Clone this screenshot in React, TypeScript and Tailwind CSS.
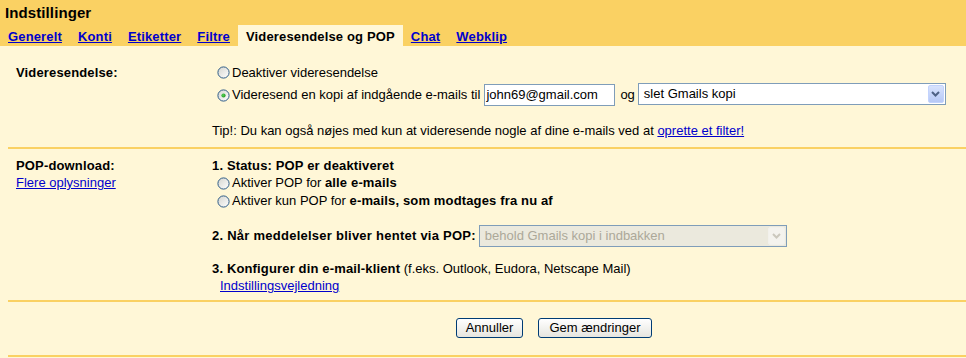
import React from "react";

function Radio({ checked }: { checked?: boolean }) {
  return (
    <svg width="13" height="13" viewBox="0 0 13 13" className="shrink-0">
      <defs>
        <linearGradient id="rg" x1="0" y1="0" x2="1" y2="1">
          <stop offset="0" stopColor="#D4D4CE" />
          <stop offset="1" stopColor="#FFFFFF" />
        </linearGradient>
        <radialGradient id="dot" cx="0.4" cy="0.4" r="0.7">
          <stop offset="0" stopColor="#55D455" />
          <stop offset="1" stopColor="#1E8F1E" />
        </radialGradient>
      </defs>
      <circle cx="6.5" cy="6.5" r="5.6" fill="url(#rg)" stroke="#2E5C87" strokeWidth="1" />
      {checked && <circle cx="6.5" cy="6.5" r="2.1" fill="url(#dot)" />}
    </svg>
  );
}

function Chevron({ color }: { color: string }) {
  return (
    <svg width="9" height="6" viewBox="0 0 9 6">
      <path d="M1 1 L4.5 4.5 L8 1" stroke={color} strokeWidth="2" fill="none" />
    </svg>
  );
}

const tabs = ["Generelt", "Konti", "Etiketter", "Filtre", "Videresendelse og POP", "Chat", "Webklip"];

export default function App() {
  return (
    <div className="w-[966px] h-[358px] overflow-hidden bg-[#FFF7D7] text-black text-[13px] font-['Liberation_Sans',Arial,sans-serif]">
      <div className="bg-[#FAD163]">
        <div className="h-[25px] pl-[5px] pt-[3px] text-[15px] leading-[20px] font-bold tracking-[0.1px]">Indstillinger</div>
        <div className="flex h-[21px]">
          {tabs.map((t) =>
            t === "Videresendelse og POP" ? (
              <div key={t} className="px-2 pt-[1px] leading-[21px] font-bold tracking-[0.15px] bg-[#FFF7D7] text-black">
                {t}
              </div>
            ) : (
              <div key={t} className="px-2 pt-[1px] leading-[21px] font-bold tracking-[0.15px]">
                <a className="text-[#0000CC] underline">{t}</a>
              </div>
            )
          )}
        </div>
      </div>

      <div className="ml-2">
        {/* Section 1 */}
        <div className="flex h-[103px] border-b-2 border-[#FAD163]">
          <div className="w-[204px] pl-2 pt-[18px] leading-[17px] font-bold tracking-[0.15px]">Videresendelse:</div>
          <div className="flex-1 pt-[18px]">
            <div className="flex h-[17px] items-center">
              <span className="ml-[5px] mr-[2px] flex"><Radio /></span>
              <span>Deaktiver videresendelse</span>
            </div>
            <div className="mt-[3px] flex h-[22px] items-center">
              <span className="ml-[5px] mr-[2px] flex"><Radio checked /></span>
              <span>Videresend en kopi af indgående e-mails til</span>
              <div className="ml-[4px] flex h-[22px] w-[131px] items-center border border-[#7F9DB9] bg-white pl-[1px]">
                john69@gmail.com
              </div>
              <span className="ml-[5px] mr-[3px]">og</span>
              <div className="-mt-[3px] flex h-[22px] w-[308px] items-center justify-between border border-[#7F9DB9] bg-white pl-[5px]">
                <span>slet Gmails kopi</span>
                <div className="mr-[1px] flex h-[18px] w-[16px] items-center justify-center rounded-[2px] border border-[#C3D3FD] bg-gradient-to-b from-[#D8E3FD] to-[#B6C8F6]">
                  <Chevron color="#4D6185" />
                </div>
              </div>
            </div>
            <div className="mt-[16px] leading-[17px]">
              Tip!: Du kan også nøjes med kun at videresende nogle af dine e-mails ved at{" "}
              <a className="text-[#0000CC] underline">oprette et filter!</a>
            </div>
          </div>
        </div>

        {/* Section 2 */}
        <div className="flex h-[153px] border-b-2 border-[#FAD163]">
          <div className="w-[204px] pl-2 pt-[8px] leading-[17px]">
            <div className="font-bold tracking-[0.15px]">POP-download:</div>
            <a className="text-[#0000CC] underline">Flere oplysninger</a>
          </div>
          <div className="flex-1 pt-[8px]">
            <div className="leading-[17px] font-bold tracking-[0.15px]">1. Status: POP er deaktiveret</div>
            <div className="flex h-[18px] items-center">
              <span className="ml-[5px] mr-[2px] flex"><Radio /></span>
              <span>
                Aktiver POP for <b className="tracking-[0.15px]">alle e-mails</b>
              </span>
            </div>
            <div className="flex h-[18px] items-center">
              <span className="ml-[5px] mr-[2px] flex"><Radio /></span>
              <span>
                Aktiver kun POP for <b className="tracking-[0.15px]">e-mails, som modtages fra nu af</b>
              </span>
            </div>
            <div className="mt-[15px] flex h-[22px] items-center">
              <span className="font-bold tracking-[0.25px]">2. Når meddelelser bliver hentet via POP:</span>
              <div className="ml-[3px] flex h-[22px] w-[308px] items-center justify-between border border-[#7F9DB9] bg-[#EBE9DD] pl-[5px] text-[#ACA899]">
                <span>behold Gmails kopi i indbakken</span>
                <div className="mr-[1px] flex h-[18px] w-[17px] items-center justify-center rounded-[2px] border border-[#F2F1EC] bg-[#F4F3EE]">
                  <Chevron color="#CBC8BD" />
                </div>
              </div>
            </div>
            <div className="mt-[13px] leading-[17px]">
              <b className="tracking-[0.15px]">3. Konfigurer din e-mail-klient</b> (f.eks. Outlook, Eudora, Netscape Mail)
            </div>
            <div className="pl-2 leading-[17px]">
              <a className="text-[#0000CC] underline">Indstillingsvejledning</a>
            </div>
          </div>
        </div>

        {/* Section 3 */}
        <div className="flex h-[55px] gap-[15px] border-b-2 border-[#FAD163] pl-[448px] pt-[16px]">
          <button className="flex h-[20px] w-[67px] items-center justify-center rounded-[3px] border border-[#003C74] bg-gradient-to-b from-white to-[#E6E5DF] text-[13px]">
            Annuller
          </button>
          <button className="flex h-[20px] w-[114px] items-center justify-center rounded-[3px] border border-[#003C74] bg-gradient-to-b from-white to-[#E6E5DF] text-[13px]">
            Gem ændringer
          </button>
        </div>
      </div>
    </div>
  );
}
